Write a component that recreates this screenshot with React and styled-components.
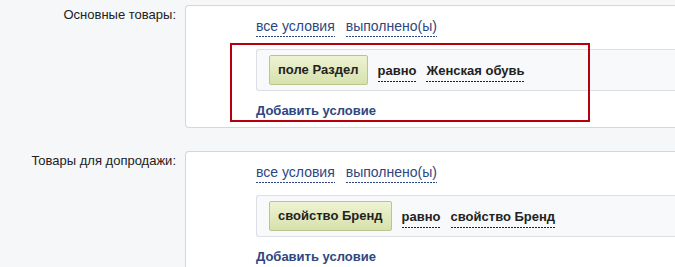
import React from "react";
import styled, { createGlobalStyle } from "styled-components";

const Global = createGlobalStyle`
  html, body { margin: 0; padding: 0; }
  body {
    background: #f5f7f9;
    font-family: Arial, "Liberation Sans", Helvetica, sans-serif;
    font-size: 13px;
    color: #222;
    overflow: hidden;
  }
`;

const Page = styled.div`
  position: relative;
  width: 675px;
  height: 267px;
  overflow: hidden;
  padding-top: 5px;
  box-sizing: border-box;
  display: flex;
  flex-direction: column;
  gap: 23px;
`;

const Row = styled.div`
  display: grid;
  grid-template-columns: 185px 1fr;
`;

const Label = styled.div`
  text-align: right;
  padding-right: 9px;
  padding-top: 2px;
  line-height: 16px;
  font-size: 13px;
  color: #222;
`;

const Panel = styled.div`
  background: #fff;
  border: 1px solid #d3d6db;
  border-right: none;
  border-radius: 4px 0 0 4px;
  padding: 12px 0 8px 70px;
  margin-right: -20px;
  display: flex;
  flex-direction: column;
`;

const Links = styled.div`
  display: flex;
  gap: 11px;
  height: 31px;
  align-items: flex-start;
`;

const Dashed = styled.span`
  display: inline-block;
  line-height: 16px;
  padding-bottom: ${(p) => (p.$bold ? 3 : 3)}px;
  font-size: ${(p) => (p.$bold ? 13 : 14)}px;
  font-weight: ${(p) => (p.$bold ? "bold" : "normal")};
  color: ${(p) => p.$color};
  background-image: linear-gradient(to right, ${(p) => p.$color} 2px, transparent 2px);
  background-size: 3px 1px;
  background-repeat: repeat-x;
  background-position: left bottom;
  cursor: pointer;
`;

const CondBox = styled.div`
  display: flex;
  align-items: center;
  gap: 10px;
  height: 40px;
  border: 1px solid #dcdfe3;
  border-right: none;
  border-radius: 3px 0 0 3px;
  background: #f8f9fb;
  padding-left: 12px;
`;

const FieldButton = styled.div`
  height: 28px;
  line-height: 28px;
  padding: 0 8px 0 8px;
  border: 1px solid #b9c48e;
  border-radius: 2px;
  background: linear-gradient(to bottom, #eef3d3, #d7e1ac);
  font-weight: bold;
  font-size: 13px;
  color: #222;
  margin-bottom: 1px;
`;

const Values = styled.div`
  display: flex;
  gap: 10px;
  padding-top: 5px;
`;

const AddLink = styled.div`
  margin-top: 12px;
  font-size: 13px;
  font-weight: bold;
  color: #2c4782;
  line-height: 16px;
`;

const Highlight = styled.div`
  position: absolute;
  left: 230px;
  top: 43px;
  width: 360px;
  height: 79px;
  box-sizing: border-box;
  border: 2px solid #b8000c;
  pointer-events: none;
`;

function Section({ label, field, value }) {
  return (
    <Row>
      <Label>{label}</Label>
      <Panel>
        <Links>
          <Dashed $color="#2c4782">все условия</Dashed>
          <Dashed $color="#2c4782">выполнено(ы)</Dashed>
        </Links>
        <CondBox>
          <FieldButton>{field}</FieldButton>
          <Values>
            <Dashed $bold $color="#222">равно</Dashed>
            <Dashed $bold $color="#222">{value}</Dashed>
          </Values>
        </CondBox>
        <AddLink>Добавить условие</AddLink>
      </Panel>
    </Row>
  );
}

export default function App() {
  return (
    <>
      <Global />
      <Page>
        <Section label="Основные товары:" field="поле Раздел" value="Женская обувь" />
        <Section label="Товары для допродажи:" field="свойство Бренд" value="свойство Бренд" />
        <Highlight />
      </Page>
    </>
  );
}
